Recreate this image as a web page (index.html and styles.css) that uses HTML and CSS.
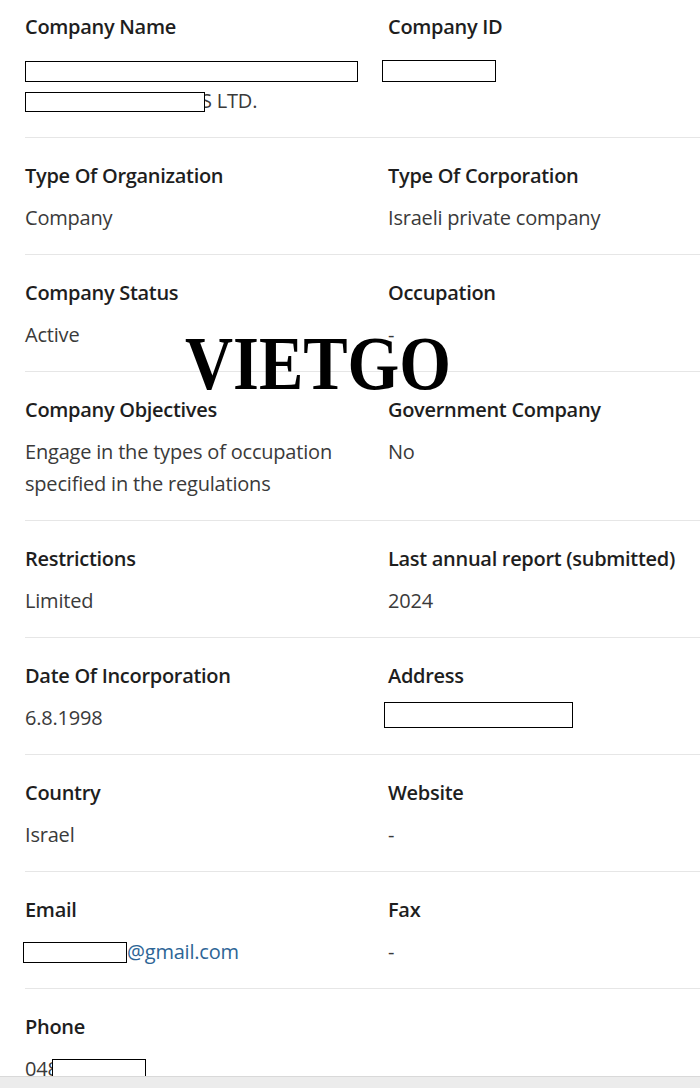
FILE: index.html
```html
<!DOCTYPE html>
<html lang="en">
<head>
<meta charset="utf-8">
<title>Company details</title>
<link rel="stylesheet" href="styles.css">
</head>
<body>
<main class="details">
  <section class="row row-first">
    <div class="field">
      <div class="label">Company Name</div>
      <div class="value">
        <span class="line"><span class="redact r-name1"></span></span>
        <span class="line"><span class="redact r-name2"></span>S LTD.</span>
      </div>
    </div>
    <div class="field">
      <div class="label">Company ID</div>
      <div class="value"><span class="redact r-id"></span></div>
    </div>
  </section>

  <section class="row">
    <div class="field">
      <div class="label">Type Of Organization</div>
      <div class="value">Company</div>
    </div>
    <div class="field">
      <div class="label">Type Of Corporation</div>
      <div class="value">Israeli private company</div>
    </div>
  </section>

  <section class="row">
    <div class="field">
      <div class="label">Company Status</div>
      <div class="value">Active</div>
    </div>
    <div class="field">
      <div class="label">Occupation</div>
      <div class="value">-</div>
    </div>
  </section>

  <section class="row">
    <div class="field">
      <div class="label">Company Objectives</div>
      <div class="value">Engage in the types of occupation<br>specified in the regulations</div>
    </div>
    <div class="field">
      <div class="label">Government Company</div>
      <div class="value">No</div>
    </div>
  </section>

  <section class="row">
    <div class="field">
      <div class="label">Restrictions</div>
      <div class="value">Limited</div>
    </div>
    <div class="field">
      <div class="label">Last annual report (submitted)</div>
      <div class="value">2024</div>
    </div>
  </section>

  <section class="row">
    <div class="field">
      <div class="label">Date Of Incorporation</div>
      <div class="value">6.8.1998</div>
    </div>
    <div class="field">
      <div class="label">Address</div>
      <div class="value"><span class="redact r-address"></span></div>
    </div>
  </section>

  <section class="row">
    <div class="field">
      <div class="label">Country</div>
      <div class="value">Israel</div>
    </div>
    <div class="field">
      <div class="label">Website</div>
      <div class="value">-</div>
    </div>
  </section>

  <section class="row">
    <div class="field">
      <div class="label">Email</div>
      <div class="value"><span class="redact r-email"></span><a class="link" href="#">@gmail.com</a></div>
    </div>
    <div class="field">
      <div class="label">Fax</div>
      <div class="value">-</div>
    </div>
  </section>

  <section class="row row-last">
    <div class="field">
      <div class="label">Phone</div>
      <div class="value">048<span class="redact r-phone"></span></div>
    </div>
  </section>
</main>

<div class="watermark">VIETGO</div>
<div class="bottom-bar"></div>
</body>
</html>
```

FILE: styles.css
```css
html, body {
  margin: 0;
  padding: 0;
  background: #ffffff;
}

body {
  font-family: "Open Sans", "Noto Sans", "Liberation Sans", sans-serif;
  color: #333333;
  overflow: hidden;
  height: 1088px;
}

.details {
  display: flex;
  flex-direction: column;
}

.row {
  display: grid;
  grid-template-columns: 363px 1fr;
  margin-left: 25px;
  padding: 22px 0 20px 0;
  border-bottom: 1px solid #e6e6e6;
}

.row-first {
  padding-top: 11px;
}

.row-last {
  border-bottom: none;
}

.field {
  display: flex;
  flex-direction: column;
  gap: 10px;
}

.label {
  font-size: 20px;
  font-weight: 600;
  line-height: 32px;
  color: #1e1e1e;
  letter-spacing: -0.3px;
}

.value {
  font-size: 20px;
  font-weight: 400;
  line-height: 32px;
  color: #3a3a3a;
  letter-spacing: -0.2px;
}

.line {
  display: block;
}

.link {
  color: #2d6596;
  text-decoration: none;
}

.redact {
  display: inline-block;
  position: relative;
  box-sizing: border-box;
  border: 1.5px solid #000;
  background: #fff;
  vertical-align: middle;
}

.r-name1 {
  width: 333px;
  height: 21px;
  margin-top: 2px;
}

.r-name2 {
  width: 180px;
  height: 20px;
  margin-right: -4px;
  margin-top: -2px;
}

.r-id {
  width: 114px;
  height: 22px;
  margin-left: -6px;
  margin-top: 0px;
}

.r-address {
  width: 189px;
  height: 26px;
  margin-left: -4px;
  margin-top: -10px;
}

.r-email {
  width: 104px;
  height: 21px;
  margin-left: -2px;
  margin-top: -2px;
}

.r-phone {
  width: 94px;
  height: 20px;
  margin-left: -7px;
  margin-top: -4px;
}

.watermark {
  position: absolute;
  left: 185px;
  top: 325px;
  font-family: "Liberation Serif", "Times New Roman", serif;
  font-weight: 700;
  font-size: 76px;
  line-height: 1;
  color: #000;
  transform: scaleX(0.875);
  transform-origin: left top;
  white-space: nowrap;
}

.bottom-bar {
  position: fixed;
  left: 0;
  right: 0;
  bottom: 0;
  height: 11px;
  background: #ececec;
  border-top: 1px solid #d9d9d9;
}
```
